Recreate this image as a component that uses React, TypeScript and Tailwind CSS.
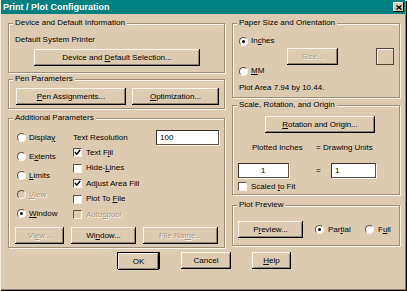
import React from "react";

const btnBase =
  "flex items-center justify-center h-[17px] bg-[#dccbb1] shadow-[inset_-1px_-1px_0_#000,inset_1px_1px_0_#fbf5ea,inset_-2px_-2px_0_#8e816c] leading-none whitespace-nowrap";
const disabledText = "text-[#a89a86] [text-shadow:1px_1px_0_#fbf5ea]";

function Btn({
  children,
  className,
  disabled,
}: {
  children: React.ReactNode;
  className: string;
  disabled?: boolean;
}) {
  return (
    <div className={`${btnBase} ${className} ${disabled ? disabledText : ""}`}>
      <span>{children}</span>
    </div>
  );
}

function Group({
  label,
  className,
  children,
}: {
  label: string;
  className: string;
  children?: React.ReactNode;
}) {
  return (
    <div
      className={`relative border border-[#9d8f78] shadow-[inset_1px_1px_0_#fbf5ea,1px_1px_0_#fbf5ea] ${className}`}
    >
      <span className="absolute top-[-6px] left-[4px] px-[2px] bg-[#dccbb1] whitespace-nowrap">
        {label}
      </span>
      {children}
    </div>
  );
}

function Radio({ checked, disabled }: { checked?: boolean; disabled?: boolean }) {
  return (
    <span
      className={`flex items-center justify-center w-[9px] h-[9px] shrink-0 rounded-full border border-t-[#5e5344] border-l-[#5e5344] border-r-[#fbf5ea] border-b-[#fbf5ea] ${
        disabled ? "bg-[#dccbb1]" : "bg-white"
      }`}
    >
      {checked && <span className="w-[3px] h-[3px] rounded-full bg-black" />}
    </span>
  );
}

function Check({ checked, disabled }: { checked?: boolean; disabled?: boolean }) {
  return (
    <span
      className={`flex items-center justify-center w-[9px] h-[9px] shrink-0 border border-t-[#5e5344] border-l-[#5e5344] border-r-[#fbf5ea] border-b-[#fbf5ea] ${
        disabled ? "bg-[#dccbb1]" : "bg-white"
      }`}
    >
      {checked && (
        <svg width="7" height="7" viewBox="0 0 7 7">
          <polyline points="0.8,3 2.8,5.2 6.2,1" fill="none" stroke="#000" strokeWidth="1.4" />
        </svg>
      )}
    </span>
  );
}

function Field({ value, className }: { value: string; className: string }) {
  return (
    <div
      className={`flex items-center h-[15px] bg-white border border-t-[#3a3328] border-l-[#3a3328] border-r-[#5e5344] border-b-[#5e5344] shadow-[1px_1px_0_#fbf5ea] leading-none ${className}`}
    >
      {value}
    </div>
  );
}

export default function App() {
  return (
    <div className="relative w-[407px] h-[291px] bg-[#dccbb1] font-['Liberation_Sans',Arial,sans-serif] text-[8px] leading-[10px] text-black overflow-hidden shadow-[inset_1px_1px_0_#f4ecdc,inset_-1px_-1px_0_#000,inset_-2px_-2px_0_#8e816c]">
      {/* Title bar */}
      <div className="ml-[1px] mr-[2px] h-[14px] bg-[#008080] flex items-center justify-between pl-[2px] pr-[1px]">
        <span className="text-white font-bold text-[9px] leading-none">
          Print / Plot Configuration
        </span>
        <div className="flex items-center justify-center w-[11px] h-[10px] bg-[#dccbb1] shadow-[inset_-1px_-1px_0_#000,inset_1px_1px_0_#fbf5ea]">
          <svg width="6" height="5" viewBox="0 0 6 5">
            <path d="M0.5 0.5 L5.5 4.5 M5.5 0.5 L0.5 4.5" stroke="#000" strokeWidth="1.4" />
          </svg>
        </div>
      </div>

      {/* Body */}
      <div className="flex items-start pl-[8px]">
        {/* Left column */}
        <div className="flex flex-col w-[217px]">
          <Group label="Device and Default Information" className="mt-[9px] h-[50px]">
            <div className="pt-[11px] pl-[6px]">Default System Printer</div>
            <Btn className="mt-[4px] ml-[25px] w-[166px]">
              Device and <u>D</u>efault Selection...
            </Btn>
          </Group>

          <Group label="Pen Parameters" className="mt-[6px] h-[30px]">
            <div className="flex pt-[8px] pl-[7px] gap-[6px]">
              <Btn className="w-[110px]">
                <u>P</u>en Assignments...
              </Btn>
              <Btn className="w-[87px]">
                <u>O</u>ptimization...
              </Btn>
            </div>
          </Group>

          <Group label="Additional Parameters" className="mt-[9px] h-[130px]">
            <div className="flex items-start">
              <div className="flex flex-col mt-[9px] pl-[8px] w-[64px]">
                <div className="flex items-center h-[19px] gap-[3px]">
                  <Radio />
                  <span>
                    Displa<u>y</u>
                  </span>
                </div>
                <div className="flex items-center h-[19px] gap-[3px]">
                  <Radio />
                  <span>
                    E<u>x</u>tents
                  </span>
                </div>
                <div className="flex items-center h-[19px] gap-[3px]">
                  <Radio />
                  <span>
                    <u>L</u>imits
                  </span>
                </div>
                <div className="flex items-center h-[19px] gap-[3px]">
                  <Radio disabled />
                  <span className={disabledText}>
                    <u>V</u>iew
                  </span>
                </div>
                <div className="flex items-center h-[19px] gap-[3px]">
                  <Radio checked />
                  <span>
                    <u>W</u>indow
                  </span>
                </div>
              </div>
              <div className="flex flex-col mt-[11px]">
                <div className="flex items-center justify-between h-[15px] w-[146px]">
                  <span>Text Resolution</span>
                  <Field value="100" className="w-[63px] pl-[3px]" />
                </div>
                <div className="flex items-center h-[15.5px] gap-[4px]">
                  <Check checked />
                  <span>
                    Text F<u>i</u>ll
                  </span>
                </div>
                <div className="flex items-center h-[15.5px] gap-[4px]">
                  <Check />
                  <span>
                    Hide-<u>L</u>ines
                  </span>
                </div>
                <div className="flex items-center h-[15.5px] gap-[4px]">
                  <Check checked />
                  <span>
                    Ad<u>j</u>ust Area Fill
                  </span>
                </div>
                <div className="flex items-center h-[15.5px] gap-[4px]">
                  <Check />
                  <span>
                    Plot To <u>F</u>ile
                  </span>
                </div>
                <div className="flex items-center h-[15.5px] gap-[4px]">
                  <Check disabled />
                  <span className={disabledText}>
                    Auto<u>s</u>pool
                  </span>
                </div>
              </div>
            </div>
            <div className="flex mt-[4px] pl-[6px] gap-[7px]">
              <Btn className="w-[49px]" disabled>
                Vi<u>e</u>w...
              </Btn>
              <Btn className="w-[65px]">
                Wi<u>n</u>dow...
              </Btn>
              <Btn className="w-[75px]" disabled>
                File Na<u>m</u>e...
              </Btn>
            </div>
          </Group>
        </div>

        {/* Right column */}
        <div className="flex flex-col w-[168px] ml-[7px]">
          <Group label="Paper Size and Orientation" className="mt-[9px] h-[75px]">
            <div className="flex flex-col pl-[6px]">
              <div className="flex items-center h-[14px] mt-[10px] gap-[3px]">
                <Radio checked />
                <span>
                  In<u>c</u>hes
                </span>
              </div>
              <div className="flex items-center h-[17px]">
                <Btn className="ml-[48px] w-[51px]" disabled>
                  Size...
                </Btn>
                <div className="ml-[38px] w-[18px] h-[17px] border border-[#4f4538] shadow-[inset_1px_1px_0_#fbf5ea]" />
              </div>
              <div className="flex items-center h-[12px] gap-[3px]">
                <Radio />
                <span>
                  <u>M</u>M
                </span>
              </div>
              <div className="mt-[6px]">Plot Area 7.94 by 10.44.</div>
            </div>
          </Group>

          <Group label="Scale, Rotation, and Origin" className="mt-[7px] h-[90px]">
            <div className="flex flex-col pl-[5px]">
              <Btn className="mt-[10px] ml-[27px] w-[110px]">
                <u>R</u>otation and Origin...
              </Btn>
              <div className="flex mt-[10px] pl-[14px] h-[10px]">
                <span className="w-[64px]">Plotted Inches</span>
                <span className="w-[7px]">=</span>
                <span>Drawing Units</span>
              </div>
              <div className="flex items-center mt-[10px] h-[15px]">
                <Field value="1" className="w-[51px] pl-[22px]" />
                <span className="ml-[27px] w-[15px]">=</span>
                <Field value="1" className="w-[45px] pl-[3px]" />
              </div>
              <div className="flex items-center mt-[1px] h-[15px] gap-[4px]">
                <Check />
                <span>
                  Scaled <u>t</u>o Fit
                </span>
              </div>
            </div>
          </Group>

          <Group label="Plot Preview" className="mt-[10px] h-[41px]">
            <div className="flex items-center pt-[15px] pl-[5px]">
              <Btn className="w-[65px]">
                P<u>r</u>eview...
              </Btn>
              <div className="flex items-center ml-[12px] w-[50px] gap-[4px]">
                <Radio checked />
                <span>
                  Par<u>t</u>ial
                </span>
              </div>
              <div className="flex items-center gap-[4px]">
                <Radio />
                <span>
                  F<u>u</u>ll
                </span>
              </div>
            </div>
          </Group>
        </div>
      </div>

      {/* Bottom buttons */}
      <div className="flex mt-[4px]">
        <div className="ml-[117px] w-[43px] h-[17px] border border-black">
          <Btn className="w-full h-[15px]">OK</Btn>
        </div>
        <Btn className="ml-[21px] w-[50px]">Cancel</Btn>
        <Btn className="ml-[21px] w-[39px]">
          <u>H</u>elp
        </Btn>
      </div>
    </div>
  );
}
